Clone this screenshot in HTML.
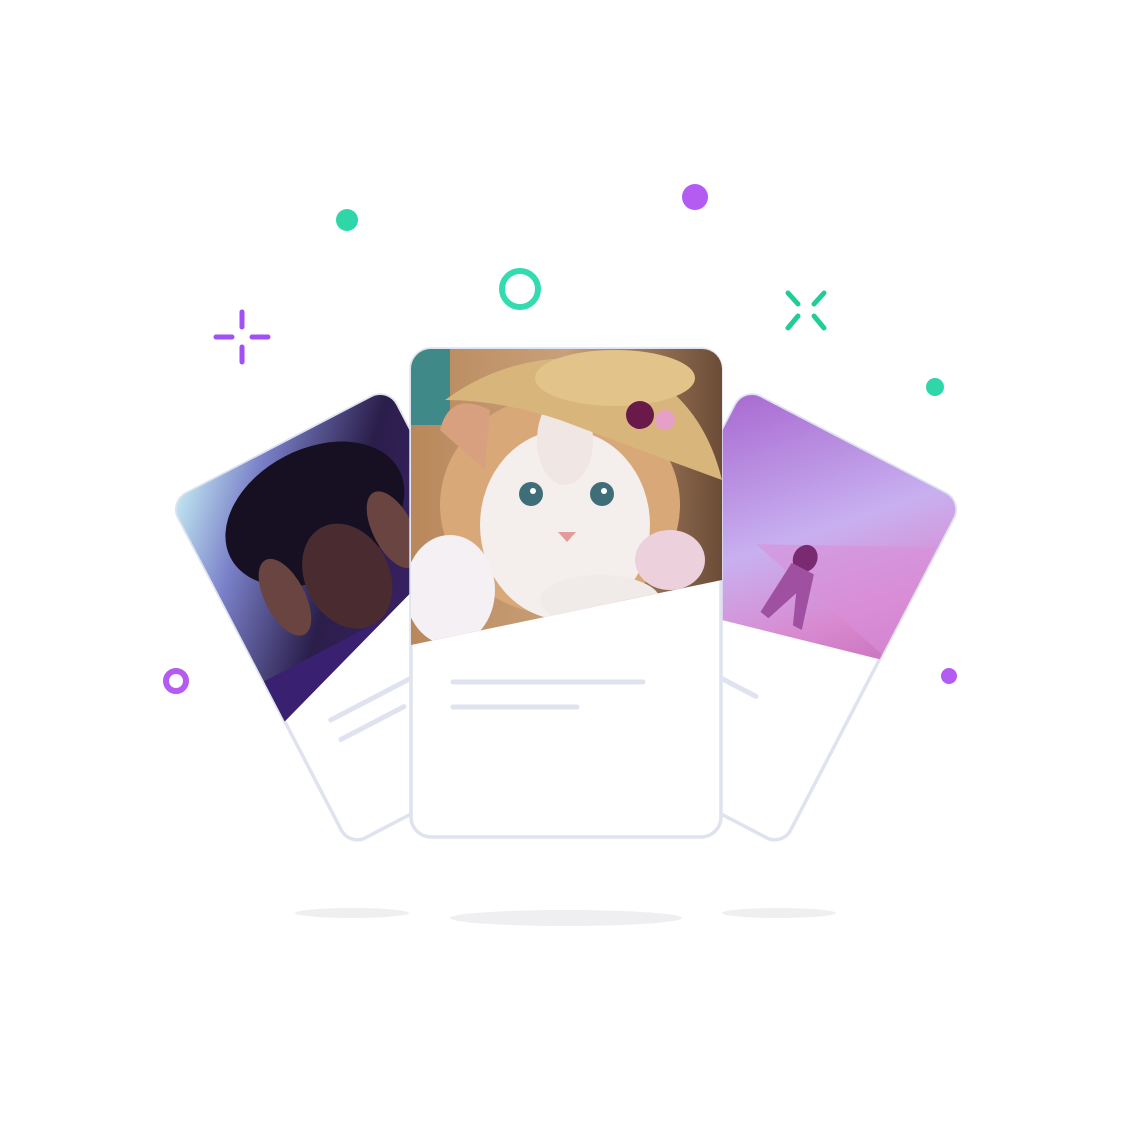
<!DOCTYPE html>
<html><head><meta charset="utf-8"><style>html,body{margin:0;padding:0;background:#fff}svg{display:block}</style></head>
<body>
<svg width="1131" height="1126" viewBox="0 0 1131 1126" xmlns="http://www.w3.org/2000/svg">
<defs>
<linearGradient id="lg" x1="0" y1="0" x2="1" y2="1"><stop offset="0" stop-color="#c8f2f6"/><stop offset="0.22" stop-color="#7a80c8"/><stop offset="0.5" stop-color="#2a1e4a"/><stop offset="1" stop-color="#4a2480"/></linearGradient>
<linearGradient id="rg" x1="0" y1="0" x2="1" y2="1"><stop offset="0" stop-color="#a868d0"/><stop offset="0.45" stop-color="#c8b0f0"/><stop offset="0.7" stop-color="#d88ad0"/><stop offset="1" stop-color="#c060b0"/></linearGradient>
<linearGradient id="cg" x1="0" y1="0" x2="1" y2="0"><stop offset="0" stop-color="#b8875a"/><stop offset="0.5" stop-color="#c9a07a"/><stop offset="1" stop-color="#6a4a35"/></linearGradient>
<clipPath id="cL"><path d="M-104.5,-192.5 H104.5 A18,18 0 0 1 122.5,-174.5 V-25 L-122.5,55 V-174.5 A18,18 0 0 1 -104.5,-192.5Z"/></clipPath>
<clipPath id="cR"><path d="M-104.5,-192.5 H104.5 A18,18 0 0 1 122.5,-174.5 V-15 L-122.5,44 V-174.5 A18,18 0 0 1 -104.5,-192.5Z"/></clipPath>
<clipPath id="cC"><path d="M431,349 H702 A20,20 0 0 1 722,369 V580 L411,645 V369 A20,20 0 0 1 431,349Z"/></clipPath>
</defs>
<ellipse cx="352" cy="913" rx="57" ry="5" fill="#efeff1"/>
<ellipse cx="566" cy="918" rx="116" ry="8" fill="#efeff1"/>
<ellipse cx="779" cy="913" rx="57" ry="5" fill="#efeff1"/>
<g transform="translate(368,616) rotate(-27.5)">
<rect x="-122.5" y="-192.5" width="245" height="388" rx="18" fill="#fff" stroke="#dfe3ef" stroke-width="3.5"/>
<g clip-path="url(#cL)">
<rect x="-125" y="-195" width="250" height="260" fill="url(#lg)"/>
<ellipse cx="0" cy="-115" rx="95" ry="65" fill="#161022"/>
<ellipse cx="0" cy="-45" rx="42" ry="55" fill="#4a2c30"/>
<ellipse cx="-65" cy="-55" rx="20" ry="42" fill="#6a4440"/>
<ellipse cx="62" cy="-65" rx="20" ry="42" fill="#6a4440"/>
<rect x="-125" y="10" width="250" height="60" fill="#3a2070"/>
</g>
<line x1="-81" y1="75" x2="30" y2="75" stroke="#dfe3ef" stroke-width="5" stroke-linecap="round"/>
<line x1="-81" y1="97" x2="-10" y2="97" stroke="#dfe3ef" stroke-width="5" stroke-linecap="round"/>
</g>
<g transform="translate(764,616) rotate(27.5)">
<rect x="-122.5" y="-192.5" width="245" height="388" rx="18" fill="#fff" stroke="#dfe3ef" stroke-width="3.5"/>
<g clip-path="url(#cR)">
<rect x="-125" y="-195" width="250" height="260" fill="url(#rg)"/>
<path d="M-40,-60 L120,-140 L125,-20 Z" fill="#d890d8" opacity="0.6"/>
<ellipse cx="10" cy="-70" rx="12" ry="14" fill="#7a2a70"/>
<path d="M0,-60 L25,-60 L40,-5 L30,-5 L18,-35 L5,0 L-5,-2 Z" fill="#a050a0"/>
</g>
<line x1="-81" y1="75" x2="30" y2="75" stroke="#dfe3ef" stroke-width="5" stroke-linecap="round"/>
<line x1="-81" y1="97" x2="-10" y2="97" stroke="#dfe3ef" stroke-width="5" stroke-linecap="round"/>
</g>
<rect x="411" y="349" width="310" height="488" rx="20" fill="#fff" stroke="#dfe3ef" stroke-width="3.5"/>
<g clip-path="url(#cC)">
<rect x="405" y="345" width="320" height="310" fill="url(#cg)"/>
<rect x="405" y="345" width="45" height="80" fill="#3f8a88"/>
<ellipse cx="560" cy="505" rx="120" ry="110" fill="#d9a878"/>
<ellipse cx="565" cy="525" rx="85" ry="95" fill="#f4eeec"/>
<ellipse cx="565" cy="440" rx="28" ry="45" fill="#f0e6e4"/>
<path d="M440,430 Q450,390 490,410 L485,470 Z" fill="#d9a080"/>
<path d="M445,400 Q520,345 620,362 Q700,390 722,480 Q640,450 560,420 Q500,400 445,400Z" fill="#d8b57a"/>
<ellipse cx="615" cy="378" rx="80" ry="28" fill="#e2c48a"/>
<circle cx="640" cy="415" r="14" fill="#6a1a4a"/>
<circle cx="665" cy="420" r="10" fill="#e6a0c8"/>
<circle cx="531" cy="494" r="12" fill="#3f6e78"/>
<circle cx="602" cy="494" r="12" fill="#3f6e78"/>
<circle cx="533" cy="491" r="3" fill="#fff"/>
<circle cx="604" cy="491" r="3" fill="#fff"/>
<path d="M558,532 L576,532 L567,542Z" fill="#e49a9a"/>
<ellipse cx="450" cy="590" rx="45" ry="55" fill="#f4f0f4"/>
<ellipse cx="670" cy="560" rx="35" ry="30" fill="#ecd0dc"/>
<ellipse cx="600" cy="600" rx="60" ry="25" fill="#f0eae8"/>
</g>
<line x1="453" y1="682" x2="643" y2="682" stroke="#dfe3ef" stroke-width="5" stroke-linecap="round"/>
<line x1="453" y1="707" x2="577" y2="707" stroke="#dfe3ef" stroke-width="5" stroke-linecap="round"/>
<circle cx="347" cy="220" r="11" fill="#2fd6a8"/>
<circle cx="695" cy="197" r="13" fill="#b45cf2"/>
<circle cx="520" cy="289" r="18" fill="none" stroke="#33dcb0" stroke-width="6"/>
<circle cx="935" cy="387" r="9" fill="#2fd6a8"/>
<circle cx="176" cy="681" r="10" fill="none" stroke="#b45cf2" stroke-width="6"/>
<circle cx="949" cy="676" r="8" fill="#b45cf2"/>
<g stroke="#a050f5" stroke-width="5" stroke-linecap="round">
<line x1="242" y1="312" x2="242" y2="327"/><line x1="242" y1="347" x2="242" y2="362"/>
<line x1="216" y1="337" x2="232" y2="337"/><line x1="252" y1="337" x2="268" y2="337"/>
</g>
<g stroke="#22cc98" stroke-width="5" stroke-linecap="round">
<line x1="788" y1="293" x2="798" y2="304"/><line x1="824" y1="293" x2="814" y2="304"/>
<line x1="788" y1="328" x2="798" y2="316"/><line x1="824" y1="328" x2="814" y2="316"/>
</g>
</svg>
</body></html>
